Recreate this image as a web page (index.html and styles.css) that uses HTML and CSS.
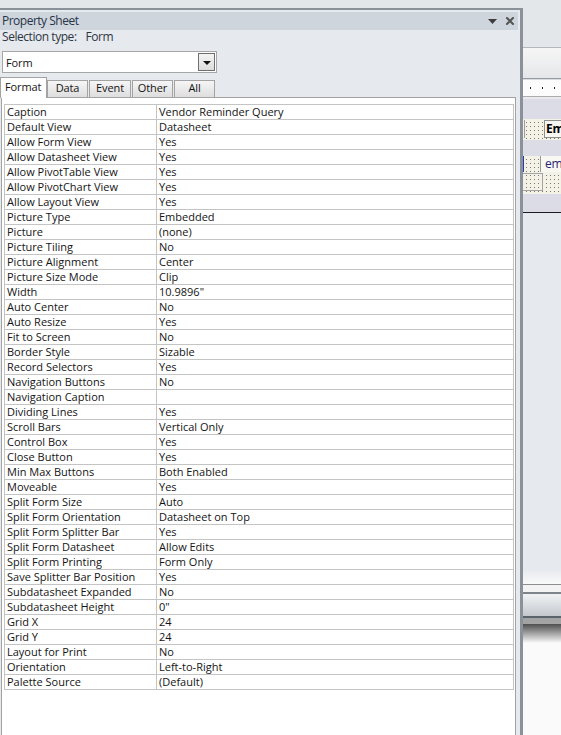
FILE: index.html
```html
<!DOCTYPE html>
<html>
<head>
<meta charset="utf-8">
<title>Property Sheet</title>
<link rel="stylesheet" href="styles.css">
</head>
<body>
<div class="page">
  <div class="panel">
    <div class="titlebar">
      <span class="title">Property Sheet</span>
      <span class="tb-icons">
        <svg class="ic-menu" width="9" height="5" viewBox="0 0 9 5"><polygon points="0,0 9,0 4.5,5" fill="#3d3d3d"/></svg>
        <svg class="ic-close" width="8" height="8" viewBox="0 0 8 8"><path d="M1 1 L7 7 M7 1 L1 7" stroke="#555" stroke-width="2" stroke-linecap="square"/></svg>
      </span>
    </div>
    <div class="seltype">Selection type:<span class="seltype-val">Form</span></div>
    <div class="combo">
      <span class="combo-text">Form</span>
      <span class="combo-btn"><i class="tri"></i></span>
    </div>
    <div class="tabs">
      <div class="tab active">Format</div>
      <div class="tab t-data">Data</div>
      <div class="tab t-event">Event</div>
      <div class="tab t-other">Other</div>
      <div class="tab t-all">All</div>
    </div>
    <div class="sheet">
      <div class="grid">
        <div class="row"><div class="name">Caption</div><div class="val">Vendor Reminder Query</div></div>
        <div class="row"><div class="name">Default View</div><div class="val">Datasheet</div></div>
        <div class="row"><div class="name">Allow Form View</div><div class="val">Yes</div></div>
        <div class="row"><div class="name">Allow Datasheet View</div><div class="val">Yes</div></div>
        <div class="row"><div class="name">Allow PivotTable View</div><div class="val">Yes</div></div>
        <div class="row"><div class="name">Allow PivotChart View</div><div class="val">Yes</div></div>
        <div class="row"><div class="name">Allow Layout View</div><div class="val">Yes</div></div>
        <div class="row"><div class="name">Picture Type</div><div class="val">Embedded</div></div>
        <div class="row"><div class="name">Picture</div><div class="val">(none)</div></div>
        <div class="row"><div class="name">Picture Tiling</div><div class="val">No</div></div>
        <div class="row"><div class="name">Picture Alignment</div><div class="val">Center</div></div>
        <div class="row"><div class="name">Picture Size Mode</div><div class="val">Clip</div></div>
        <div class="row"><div class="name">Width</div><div class="val">10.9896"</div></div>
        <div class="row"><div class="name">Auto Center</div><div class="val">No</div></div>
        <div class="row"><div class="name">Auto Resize</div><div class="val">Yes</div></div>
        <div class="row"><div class="name">Fit to Screen</div><div class="val">No</div></div>
        <div class="row"><div class="name">Border Style</div><div class="val">Sizable</div></div>
        <div class="row"><div class="name">Record Selectors</div><div class="val">Yes</div></div>
        <div class="row"><div class="name">Navigation Buttons</div><div class="val">No</div></div>
        <div class="row"><div class="name">Navigation Caption</div><div class="val"></div></div>
        <div class="row"><div class="name">Dividing Lines</div><div class="val">Yes</div></div>
        <div class="row"><div class="name">Scroll Bars</div><div class="val">Vertical Only</div></div>
        <div class="row"><div class="name">Control Box</div><div class="val">Yes</div></div>
        <div class="row"><div class="name">Close Button</div><div class="val">Yes</div></div>
        <div class="row"><div class="name">Min Max Buttons</div><div class="val">Both Enabled</div></div>
        <div class="row"><div class="name">Moveable</div><div class="val">Yes</div></div>
        <div class="row"><div class="name">Split Form Size</div><div class="val">Auto</div></div>
        <div class="row"><div class="name">Split Form Orientation</div><div class="val">Datasheet on Top</div></div>
        <div class="row"><div class="name">Split Form Splitter Bar</div><div class="val">Yes</div></div>
        <div class="row"><div class="name">Split Form Datasheet</div><div class="val">Allow Edits</div></div>
        <div class="row"><div class="name">Split Form Printing</div><div class="val">Form Only</div></div>
        <div class="row"><div class="name">Save Splitter Bar Position</div><div class="val">Yes</div></div>
        <div class="row"><div class="name">Subdatasheet Expanded</div><div class="val">No</div></div>
        <div class="row"><div class="name">Subdatasheet Height</div><div class="val">0"</div></div>
        <div class="row"><div class="name">Grid X</div><div class="val">24</div></div>
        <div class="row"><div class="name">Grid Y</div><div class="val">24</div></div>
        <div class="row"><div class="name">Layout for Print</div><div class="val">No</div></div>
        <div class="row"><div class="name">Orientation</div><div class="val">Left-to-Right</div></div>
        <div class="row"><div class="name">Palette Source</div><div class="val">(Default)</div></div>
      </div>
    </div>
  </div>
  <div class="app">
    <div class="a-top"></div>
    <div class="a-ribbon"></div>
    <div class="a-ruler"><i></i><i></i><i></i></div>
    <div class="a-sep"></div>
    <div class="a-band"></div>
    <div class="a-ctl a-ctl1"><span class="edge"></span><span class="dotfill"></span><span class="lbl">Em</span></div>
    <div class="a-band a-band2"></div>
    <div class="a-ctl a-ctl2"><span class="edge blue"></span><span class="dotfill"></span><span class="txt">ema</span></div>
    <div class="a-ctl a-ctl3"><span class="box"></span><span class="dotfill"></span></div>
    <div class="a-band a-band3"></div>
    <div class="a-blank"></div>
    <div class="a-fade"></div>
    <div class="a-bar"></div>
    <div class="a-shadow"></div>
    <div class="a-white"></div>
  </div>
</div>
</body>
</html>
```

FILE: styles.css
```css
html, body {
  margin: 0;
  padding: 0;
}
body {
  width: 561px;
  height: 735px;
  overflow: hidden;
  background: #e4e7ea;
  font-family: "Open Sans", "Noto Sans", "DejaVu Sans", sans-serif;
  color: #141414;
}
.page {
  display: flex;
  height: 735px;
}

/* ---------- property sheet panel ---------- */
.panel {
  flex: none;
  width: 523px;
  box-sizing: border-box;
  margin-top: 8px;
  padding-top: 2px;
  border-top: 2px solid #8b9198;
  border-right: 3px solid #8b9198;
  background: #e6e9ed;
  display: flex;
  flex-direction: column;
}
.titlebar {
  height: 18px;
  margin-right: 2px;
  padding-left: 2px;
  background: #cfd5dc;
  display: flex;
  align-items: center;
}
.title {
  font-size: 12px;
  line-height: 18px;
  color: #26344a;
  letter-spacing: -0.5px;
}
.tb-icons {
  margin-left: auto;
  display: flex;
  align-items: center;
  gap: 9px;
  padding-right: 4px;
}
.tb-icons svg {
  display: block;
}
.seltype {
  height: 14px;
  line-height: 14px;
  font-size: 12px;
  padding-left: 2px;
  color: #2d3744;
  letter-spacing: -0.45px;
}
.seltype-val {
  margin-left: 9px;
}
.combo {
  margin: 7px 0 0 2px;
  width: 215px;
  height: 22px;
  box-sizing: border-box;
  border: 1px solid #a6a6a6;
  background: #fff;
  display: flex;
  align-items: center;
}
.combo-text {
  padding-left: 3px;
  font-size: 11px;
  letter-spacing: -0.1px;
}
.combo-btn {
  margin-left: auto;
  margin-right: 1px;
  width: 17px;
  height: 18px;
  box-sizing: border-box;
  border: 1px solid #6f6f6f;
  background: linear-gradient(#f4f4f4, #dcdcdc);
  display: flex;
  align-items: center;
  justify-content: center;
}
.tri {
  width: 0;
  height: 0;
  border-left: 4px solid transparent;
  border-right: 4px solid transparent;
  border-top: 4px solid #111;
  margin-top: 1px;
}

/* tabs */
.tabs {
  margin-top: 4px;
  height: 20px;
  display: flex;
  align-items: flex-end;
  position: relative;
  z-index: 1;
}
.tab {
  box-sizing: border-box;
  height: 17px;
  border: 1px solid #a3a3a3;
  border-bottom: none;
  background: linear-gradient(#f6f6f6, #dedede);
  font-size: 11px;
  line-height: 14px;
  text-align: center;
  margin-left: 1px;
  letter-spacing: -0.1px;
}
.tab.active {
  margin-left: 0;
  width: 47px;
  height: 21px;
  margin-bottom: -1px;
  padding: 2px 0 0 4px;
  text-align: left;
  background: #fff;
}
.t-data { margin-left: 0; width: 41px; }
.t-event { width: 42px; }
.t-other { width: 41px; }
.t-all { width: 41px; }

/* property grid */
.sheet {
  flex: 1;
  margin: 0 4px 0 1px;
  border: 1px solid #a3a3a3;
  border-bottom: none;
  background: #fff;
  padding: 6px 1px 0 2px;
}
.grid {
  border: 1px solid #c4c4c4;
  border-bottom: none;
}
.row {
  display: flex;
  height: 15px;
  box-sizing: border-box;
  border-bottom: 1px solid #c4c4c4;
  font-size: 11px;
  line-height: 14px;
  white-space: nowrap;
}
.name {
  flex: none;
  width: 152px;
  box-sizing: border-box;
  border-right: 1px solid #c4c4c4;
  padding-left: 2px;
}
.val {
  padding-left: 2px;
}

/* ---------- application behind ---------- */
.app {
  flex: 1;
  min-width: 0;
  overflow: hidden;
  display: flex;
  flex-direction: column;
}
.a-top {
  height: 47px;
  background: #e4e7ea;
}
.a-ribbon {
  height: 30px;
  border-top: 1px solid #b3b8be;
  background: linear-gradient(#f6f6f6, #e5e6e8);
}
.a-ruler {
  height: 17px;
  border-top: 1px solid #959ca3;
  box-shadow: inset 0 1px 0 #d9dbde;
  background: #fcfcfc;
  display: flex;
  align-items: center;
  padding-left: 7px;
  gap: 11px;
}
.a-ruler i {
  width: 1px;
  height: 2px;
  background: #222;
  margin-top: 1px;
}
.a-sep {
  height: 2px;
  border-top: 1px solid #adadad;
  background: #e9e9ee;
}
.a-band {
  height: 20px;
  background: #dcdce6;
}
.a-band2 {
  height: 16px;
}
.a-band3 {
  height: 18px;
  border-bottom: 1px solid #1c1c1c;
}
.a-ctl {
  display: flex;
  background-color: #777;
  background-image:
    linear-gradient(90deg, #f4f2e6 3px, transparent 3px),
    linear-gradient(#f4f2e6 3px, transparent 3px);
  background-size: 4px 4px;
}
.a-ctl1 {
  height: 21px;
}
.a-ctl1 .edge {
  width: 1px;
  margin: 1px 0 2px 1px;
  background: #9c9c9c;
}
.a-ctl1 .dotfill {
  flex: none;
  width: 19px;
}
.a-ctl1 .lbl {
  flex: 1;
  margin: 1px 0 2px 0;
  border: 1px solid #8d8d8d;
  border-right: none;
  background: #f7f6f0;
  font-size: 12px;
  font-weight: bold;
  line-height: 16px;
  padding-left: 1px;
  color: #000;
  letter-spacing: -0.3px;
  overflow: hidden;
  white-space: nowrap;
}
.a-ctl2 {
  height: 16px;
}
.a-ctl2 .edge {
  width: 1px;
  background: #2a3cb0;
}
.a-ctl2 .dotfill {
  flex: none;
  width: 16px;
  border-right: 1px solid #9a9a9a;
}
.a-ctl2 .txt {
  flex: 1;
  background: #f8f7f2;
  font-size: 12px;
  line-height: 15px;
  padding-left: 4px;
  color: #242474;
  letter-spacing: -0.3px;
  overflow: hidden;
  white-space: nowrap;
}
.a-ctl3 {
  height: 22px;
}
.a-ctl3 .box {
  flex: none;
  width: 19px;
  margin: 1px 0 3px 0;
  border: 1px solid #a4a4a4;
  border-left: none;
}
.a-ctl3 .dotfill {
  flex: 1;
}
.a-blank {
  height: 356px;
  background: #e6e9ee;
}
.a-fade {
  height: 15px;
  background: linear-gradient(#e6e9ee, #f9f9f9);
}
.a-bar {
  height: 31px;
  border-top: 1px solid #8d8d8d;
  border-bottom: 2px solid #5c636b;
  background: linear-gradient(#f3f3f3 0, #f3f3f3 7px, #7d848c 7px, #7d848c 9px, #f1f2f4 9px, #c3c8ce 100%);
}
.a-shadow {
  height: 25px;
  background: linear-gradient(#a3a3a3 0, #a3a3a3 6px, #4e4e4e 6px, #fafafa 100%);
}
.a-white {
  flex: 1;
  background: #fafafa;
}
```
